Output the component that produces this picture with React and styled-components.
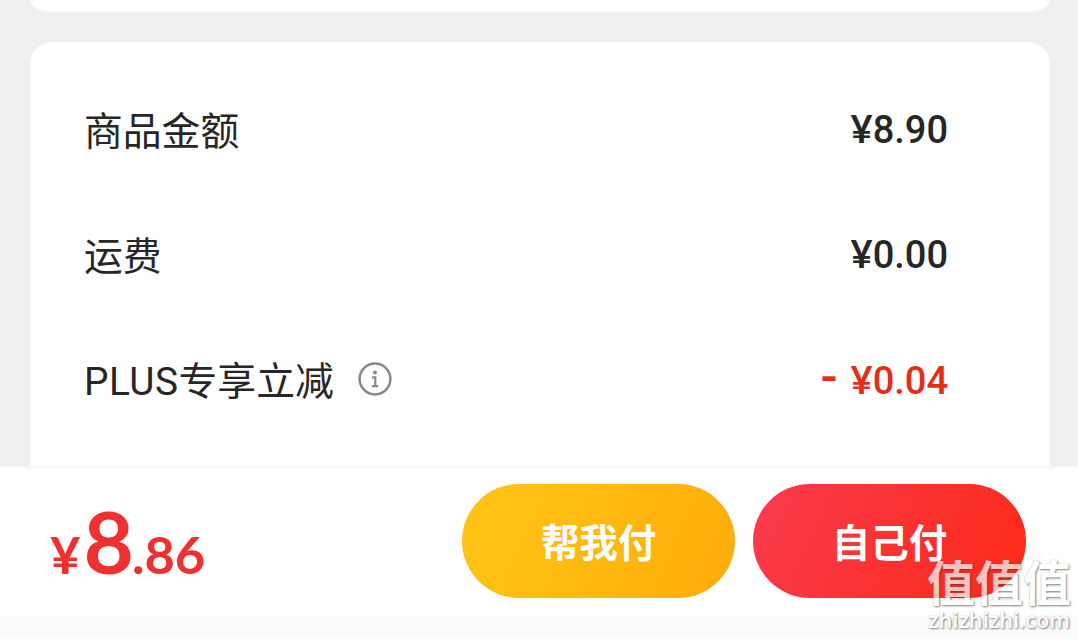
import React from 'react'
import styled, { createGlobalStyle } from 'styled-components';

const GlobalStyle = createGlobalStyle`
  * {
    box-sizing: border-box;
  }
  body {
    margin: 0;
    background-color: #f0f0f0;
    font-family: Roboto, 'Noto Sans CJK SC', sans-serif;
  }
`

const Page = styled.div`
  position: relative;
  display: flex;
  flex-direction: column;
  height: 639px;
  overflow: hidden;
`

const PrevCard = styled.div`
  flex: none;
  height: 12px;
  margin: 0 28px 30px 30px;
  border-radius: 0 0 22px 22px / 0 0 12px 12px;
  background-color: #fff;
`

const PriceCard = styled.div`
  flex: 1;
  margin: 0 28px 0 30px;
  padding: 26px 102px 0 54px;
  border-radius: 22px 22px 0 0;
  background-color: #fff;
`

const PriceRow = styled.div`
  display: flex;
  justify-content: space-between;
  align-items: center;
  height: 125px;
`

const Label = styled.div`
  display: flex;
  align-items: center;
  padding-top: 2px;
  color: #262626;
  font-size: 38.8px;
  line-height: 56px;
  svg {
    margin: -6px 0 0 24px;
  }
`

const Latin = styled.span`
  letter-spacing: 0.5px;
`

const Amount = styled.div`
  display: flex;
  align-items: baseline;
  padding-bottom: 4px;
  color: ${({ $discount }) => ($discount ? '#e62e17' : '#262626')};
  font-size: 38px;
  font-weight: 500;
  line-height: 56px;
`

const Minus = styled.span`
  margin-right: 13px;
  font-size: 50px;
`

const Yen = styled.span`
  font-family: Lato, sans-serif;
  font-weight: 700;
`

const PayBar = styled.div`
  flex: none;
  display: flex;
  justify-content: space-between;
  height: 173px;
  padding: 16px 52px 0 50px;
  border-top: 2px solid #f7f7f7;
  background: linear-gradient(#fff 148px, #fcfcfc 148px);
`

const Total = styled.div`
  display: flex;
  align-items: baseline;
  height: 114px;
  color: #ef3030;
  font-family: Lato, sans-serif;
  font-size: 52.5px;
  font-weight: 700;
  line-height: 114px;
  strong {
    margin: 0 -2px 0 3px;
    font-size: 87px;
    font-weight: 700;
  }
`

const Buttons = styled.div`
  display: flex;
  gap: 18px;
`

const PayButton = styled.button`
  width: 273px;
  height: 114px;
  padding: 0 0 2px;
  border: none;
  border-radius: 57px;
  color: #fff;
  background: ${({ $self }) =>
    $self
      ? 'linear-gradient(115deg, #fa3c50, #fa3232 50%, #fc2a17)'
      : 'linear-gradient(115deg, #ffc517, #ffb90f 50%, #ffab09)'};
  font-family: 'Noto Sans CJK SC', sans-serif;
  font-size: 38.5px;
  font-weight: 700;
  line-height: 56px;
  cursor: pointer;
`

const Watermark = styled.div`
  position: absolute;
  right: 7px;
  bottom: 6px;
  display: flex;
  flex-direction: column;
  align-items: center;
  width: 144px;
  color: #fff;
  font-family: 'Noto Sans CJK SC', sans-serif;
  font-weight: 700;
  text-shadow: 1px 1px 2px rgba(60, 60, 60, 0.9), 0 0 1px rgba(60, 60, 60, 0.5);
  opacity: 0.7;
  pointer-events: none;
  span {
    font-size: 48px;
    line-height: 54px;
  }
  small {
    font-family: 'Noto Sans', sans-serif;
    font-size: 21.6px;
    font-weight: 600;
    line-height: 26px;
  }
`

const InfoIcon = () => (
  <svg width="34" height="34" viewBox="0 0 34 34" fill="none" stroke="#888">
    <circle cx="17" cy="17" r="15.4" strokeWidth="2.5" />
    <circle cx="17" cy="10.6" r="2" fill="#888" stroke="none" />
    <path d="M14 15.4H17.3V24M14 24.2H20.2" strokeWidth="2.2" />
  </svg>
)

const rows = [
  { label: '商品金额', amount: '8.90' },
  { label: '运费', amount: '0.00' },
  { prefix: 'PLUS', label: '专享立减', amount: '0.04', info: true, discount: true },
]

const App = () => {
  return (
    <Page>
      <GlobalStyle />
      <PrevCard />
      <PriceCard>
        {rows.map((row) => (
          <PriceRow key={row.label}>
            <Label>
              {row.prefix && <Latin>{row.prefix}</Latin>}
              {row.label}
              {row.info && <InfoIcon />}
            </Label>
            <Amount $discount={row.discount}>
              {row.discount && <Minus>-</Minus>}
              <Yen>¥</Yen>
              {row.amount}
            </Amount>
          </PriceRow>
        ))}
      </PriceCard>
      <PayBar>
        <Total>
          ¥<strong>8</strong>.86
        </Total>
        <Buttons>
          <PayButton>帮我付</PayButton>
          <PayButton $self>自己付</PayButton>
        </Buttons>
      </PayBar>
      <Watermark>
        <span>值值值</span>
        <small>zhizhizhi.com</small>
      </Watermark>
    </Page>
  )
}

export default App
